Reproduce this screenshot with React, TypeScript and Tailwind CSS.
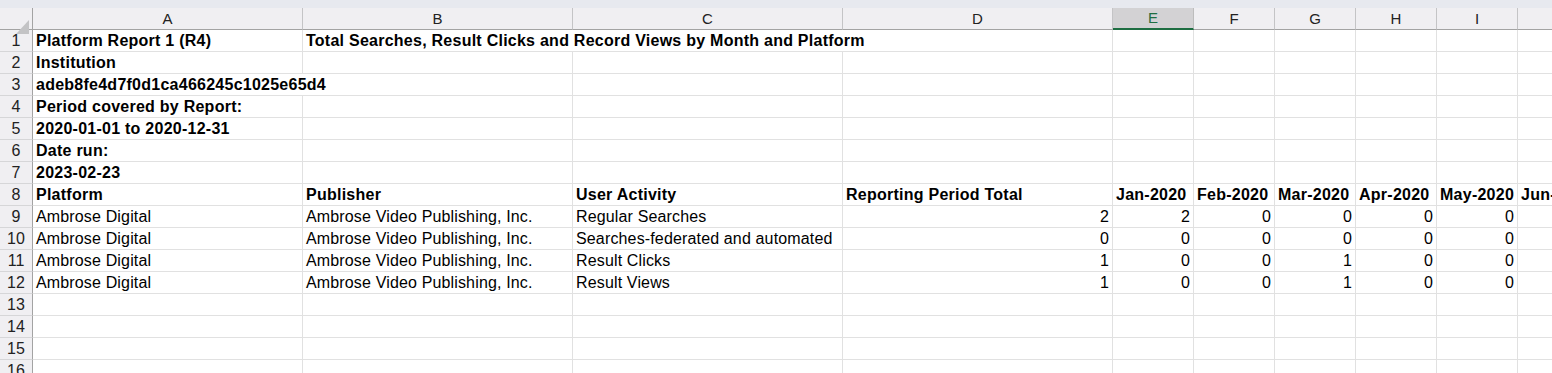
import React from "react";

type Cell = {
  text?: string;
  bold?: boolean;
  right?: boolean;
  span?: number;
};

const columns = ["A", "B", "C", "D", "E", "F", "G", "H", "I", "J"];
const selectedColumn = "E";

const b = (text: string, span?: number): Cell => ({ text, bold: true, span });
const n = (text: string): Cell => ({ text, right: true });

const dataRow = (activity: string, values: string[]): Cell[] => [
  { text: "Ambrose Digital" },
  { text: "Ambrose Video Publishing, Inc." },
  { text: activity },
  ...values.map(n),
  {},
];

const rows: Cell[][] = [
  [b("Platform Report 1 (R4)"), b("Total Searches, Result Clicks and Record Views by Month and Platform", 3)],
  [b("Institution")],
  [b("adeb8fe4d7f0d1ca466245c1025e65d4", 2)],
  [b("Period covered by Report:")],
  [b("2020-01-01 to 2020-12-31")],
  [b("Date run:")],
  [b("2023-02-23")],
  [
    b("Platform"),
    b("Publisher"),
    b("User Activity"),
    b("Reporting Period Total"),
    b("Jan-2020"),
    b("Feb-2020"),
    b("Mar-2020"),
    b("Apr-2020"),
    b("May-2020"),
    b("Jun-2020"),
  ],
  dataRow("Regular Searches", ["2", "2", "0", "0", "0", "0"]),
  dataRow("Searches-federated and automated", ["0", "0", "0", "0", "0", "0"]),
  dataRow("Result Clicks", ["1", "0", "0", "1", "0", "0"]),
  dataRow("Result Views", ["1", "0", "0", "1", "0", "0"]),
  [],
  [],
  [],
  [],
];

// pad each row out to the 10 columns
const fillRow = (cells: Cell[]): Cell[] => {
  const out = [...cells];
  let used = out.reduce((sum, c) => sum + (c.span || 1), 0);
  while (used < columns.length) {
    out.push({});
    used++;
  }
  return out;
};

const spanClass: Record<number, string> = {
  1: "",
  2: "col-span-2",
  3: "col-span-3",
};

const App: React.FC = () => {
  return (
    <div
      className="w-[1552px] h-[373px] overflow-hidden bg-white text-black"
      style={{ fontFamily: '"Liberation Sans", Arial, sans-serif' }}
    >
      <div className="h-2 bg-[#e7e9ef]" />
      <div className="grid w-max grid-cols-[33px_270px_270px_270px_270px_81px_81px_81px_81px_81px_81px]">
        {/* corner */}
        <div className="h-[22px] bg-[#f0eff2] border-r border-b border-[#a3a3a3] relative">
          <svg className="absolute left-[16px] top-[12px]" width="13" height="14" viewBox="0 0 13 14">
            <polygon points="13,0 13,14 0,14" fill="#c3c3c5" />
          </svg>
        </div>
        {columns.map((col) =>
          col === selectedColumn ? (
            <div
              key={col}
              className="h-[22px] flex items-center justify-center pt-[1px] bg-[#d3d2d4] border-r border-[#bdbdbd] border-b-2 border-b-[#1e6e42] text-[15px] text-[#1e6e42]"
            >
              {col}
            </div>
          ) : (
            <div
              key={col}
              className="h-[22px] flex items-center justify-center pt-[1px] bg-[#f0eff2] border-r border-[#c4c4c6] border-b border-b-[#a3a3a3] text-[15px] text-[#222]"
            >
              {col}
            </div>
          ),
        )}

        {rows.map((row, i) => (
          <React.Fragment key={i}>
            <div className="h-[22px] flex items-center justify-center pt-[1px] bg-[#f0eff2] border-r border-[#a3a3a3] border-b border-b-[#d6d6d8] text-[16px] text-[#222]">
              {i + 1}
            </div>
            {fillRow(row).map((cell, j) => (
              <div
                key={j}
                className={`h-[22px] flex items-center px-[3px] pt-[1px] whitespace-nowrap overflow-hidden border-r border-b border-[#e1e1e1] text-[16px] ${
                  spanClass[cell.span || 1]
                } ${cell.bold ? "font-bold tracking-[0.25px]" : "tracking-[0.15px]"} ${
                  cell.right ? "justify-end" : ""
                }`}
              >
                {cell.text}
              </div>
            ))}
          </React.Fragment>
        ))}
      </div>
    </div>
  );
};

export default App;
